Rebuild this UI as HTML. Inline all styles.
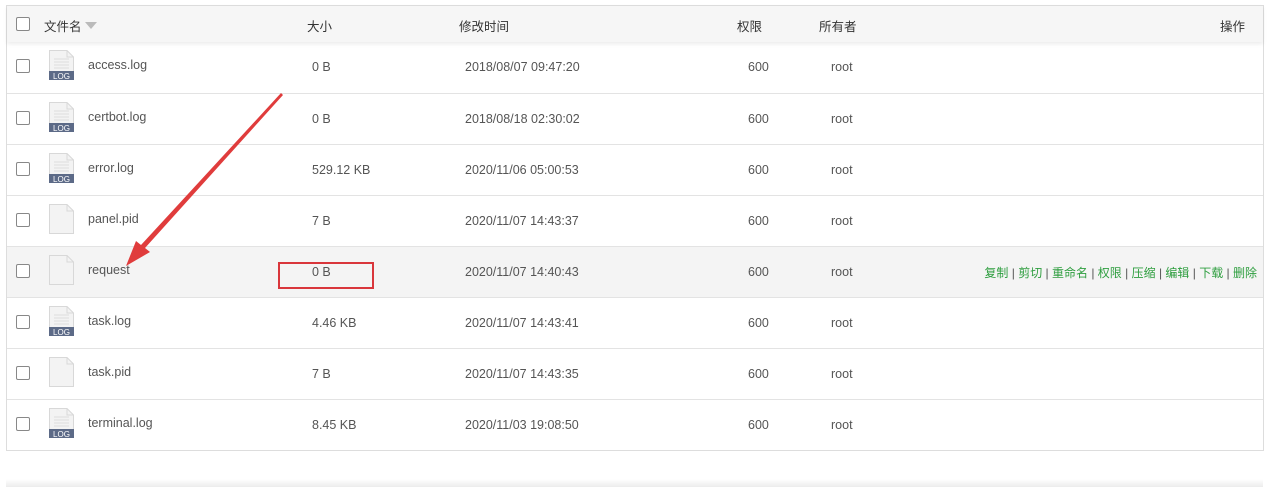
<!DOCTYPE html>
<html><head><meta charset="utf-8"><style>
body{margin:0;width:1274px;height:495px;background:#fff;font-family:"Liberation Sans","Noto Sans CJK SC",sans-serif;font-size:12.5px;color:#555;position:relative;overflow:hidden}
.tbl{position:absolute;left:6px;top:5px;width:1256px;height:444px;border:1px solid #ddd}
.hd{position:absolute;left:0;top:0;width:1256px;height:36px;background:#f6f6f6;box-shadow:0 2px 4px rgba(0,0,0,.08)}
.row{position:absolute;left:0;width:1256px;height:50px;border-top:1px solid #e3e3e3}
.cb{position:absolute;left:9px;width:12px;height:12px;border:1px solid #888;border-radius:2px;background:#fff}
.t{position:absolute;white-space:nowrap}
.ic{position:absolute;left:41px;top:7px}
.ops{position:absolute;right:6px;top:17px;color:#2e9e3f;font-size:12px}
.sep{color:#555}
</style></head><body>
<div class="tbl">
 <div class="hd">
  <div class="cb" style="top:11px"></div>
  <div class="t" style="left:37px;top:10px;color:#333">文件名 <span style="display:inline-block;width:0;height:0;border-left:6px solid transparent;border-right:6px solid transparent;border-top:7px solid #bbb;vertical-align:2px"></span></div>
  <div class="t" style="left:300px;top:10px;color:#333">大小</div>
  <div class="t" style="left:452px;top:10px;color:#333">修改时间</div>
  <div class="t" style="left:730px;top:10px;color:#333">权限</div>
  <div class="t" style="left:812px;top:10px;color:#333">所有者</div>
  <div class="t" style="left:1213px;top:10px;color:#333">操作</div>
 </div>
</div>
<div style="position:absolute;left:6px;top:479px;width:1257px;height:8px;background:linear-gradient(#fff,#ececec)"></div>
<svg style="position:absolute;left:0;top:0" width="1274" height="495">
 <polygon points="281,93 283,95 145,248 150,252 126,266 136,241 141,245" fill="#e03c3c"/>
 <rect x="279" y="263" width="94" height="25" fill="none" stroke="#d9363b" stroke-width="2"/>
</svg>
<script>
var d=[["access.log","0 B","2018/08/07 09:47:20",1],["certbot.log","0 B","2018/08/18 02:30:02",1],["error.log","529.12 KB","2020/11/06 05:00:53",1],["panel.pid","7 B","2020/11/07 14:43:37",0],["request","0 B","2020/11/07 14:40:43",0],["task.log","4.46 KB","2020/11/07 14:43:41",1],["task.pid","7 B","2020/11/07 14:43:35",0],["terminal.log","8.45 KB","2020/11/03 19:08:50",1]];
var h="";
d.forEach(function(r,i){
 var top=36+i*51;
 var ic='<svg class="ic" width="27" height="32" viewBox="0 0 27 32"><path d="M1.5 1.5H19L25.5 8V30.5H1.5Z" fill="#f3f3f3" stroke="#d8d8d8"/><path d="M19 1.5V8H25.5" fill="none" stroke="#d8d8d8"/>'+(r[3]?'<path d="M6 10H21M6 13H21M6 16H21M6 19H21" stroke="#ddd"/><rect x="1" y="22" width="25" height="9" fill="#5c6a87"/><text x="13.5" y="30" font-size="8" fill="#fff" text-anchor="middle" font-family="Liberation Sans">LOG</text>':'')+'</svg>';
 h+='<div class="row" style="top:'+top+'px;'+(i==4?'background:#f4f4f4;':'')+(i==0?'border-top:none;':'')+'">'+
 '<div class="cb" style="top:17px"></div>'+ic+
 '<div class="t" style="left:81px;top:16px">'+r[0]+'</div>'+
 '<div class="t" style="left:305px;top:18px">'+r[1]+'</div>'+
 '<div class="t" style="left:458px;top:18px">'+r[2]+'</div>'+
 '<div class="t" style="left:741px;top:18px">600</div>'+
 '<div class="t" style="left:824px;top:18px">root</div>'+
 (i==4?'<div class="t ops">复制 <span class="sep">|</span> 剪切 <span class="sep">|</span> 重命名 <span class="sep">|</span> 权限 <span class="sep">|</span> 压缩 <span class="sep">|</span> 编辑 <span class="sep">|</span> 下载 <span class="sep">|</span> 删除</div>':'')+
 '</div>';
});
document.querySelector(".tbl").insertAdjacentHTML("beforeend",h);
</script>
</body></html>
